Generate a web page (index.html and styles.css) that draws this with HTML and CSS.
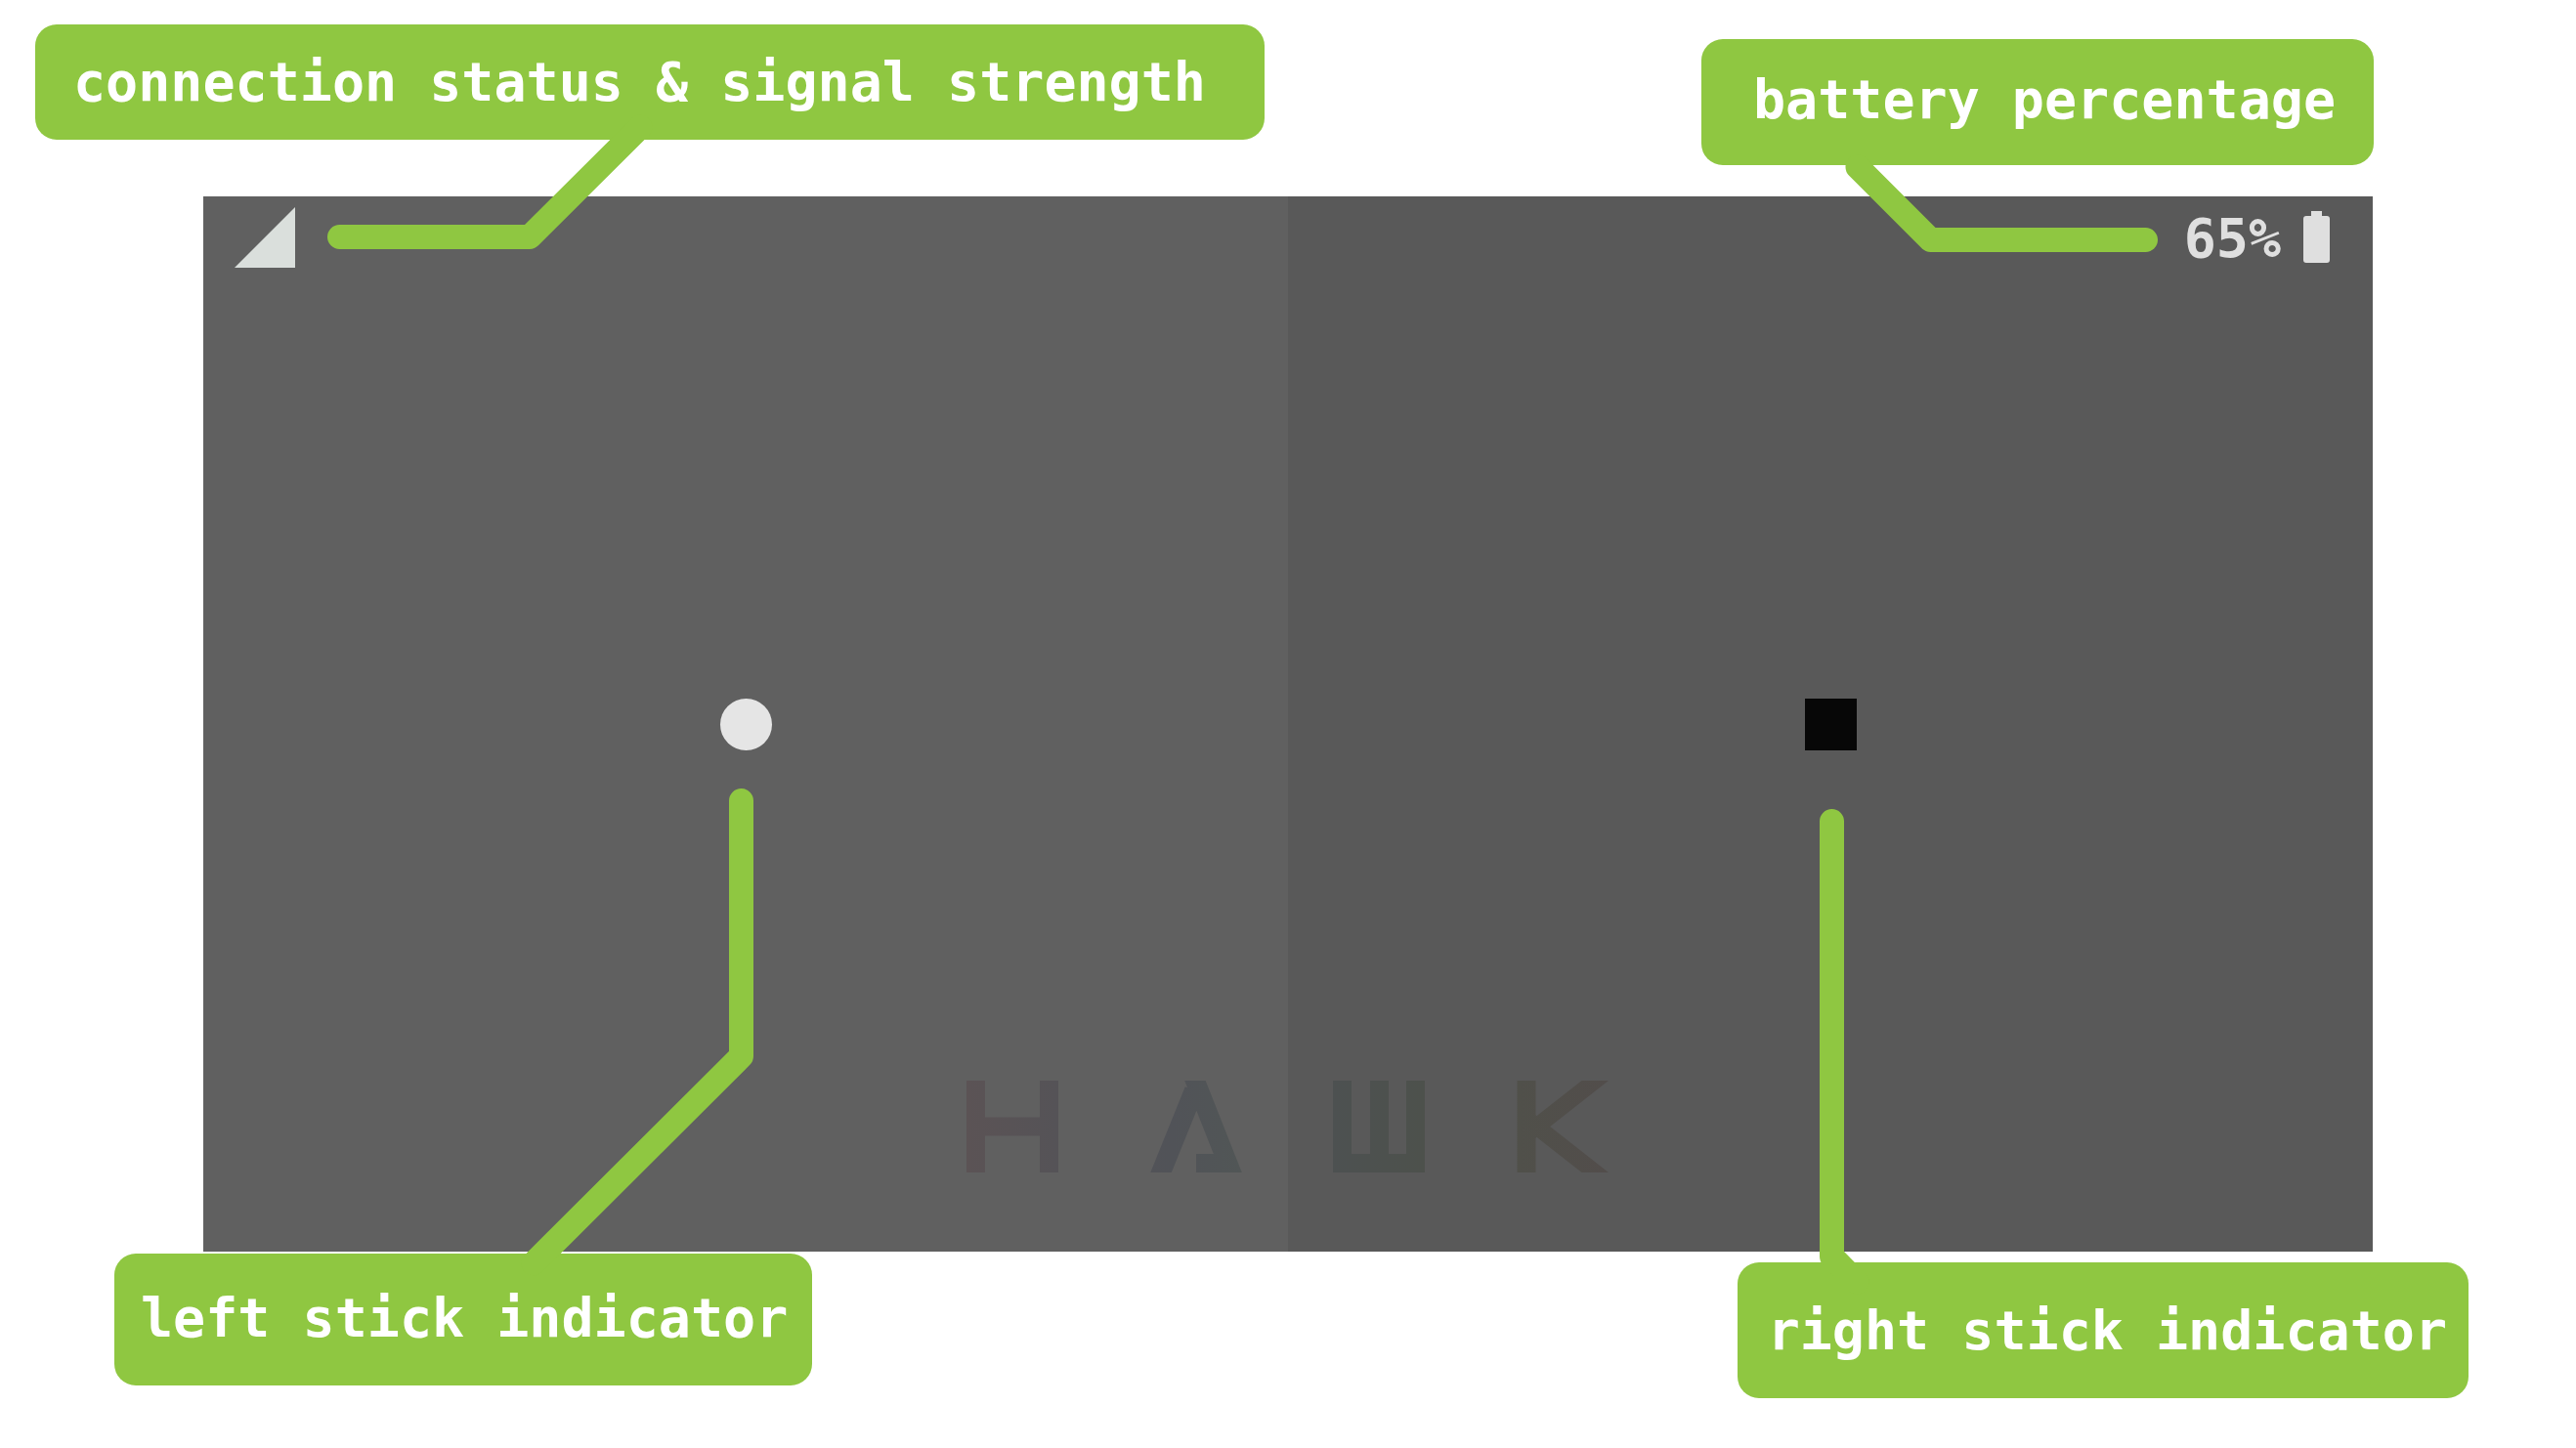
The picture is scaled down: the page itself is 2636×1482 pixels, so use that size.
FILE: index.html
```html
<!DOCTYPE html>
<html lang="en">
<head>
<meta charset="utf-8">
<meta name="viewport" content="width=device-width, initial-scale=1">
<title>Hawk controller screen guide</title>
<link rel="stylesheet" href="styles.css">
</head>
<body>
<main class="guide">
  <div class="callouts callouts-top">
    <p class="callout callout-signal">connection status &amp; signal strength</p>
    <p class="callout callout-battery">battery percentage</p>
  </div>

  <section class="screen" aria-label="Controller screen">
    <div class="panel panel-left">
      <div class="status">
        <svg class="signal-icon" viewBox="0 0 62 62" role="img" aria-label="Signal"><path d="M0 62L62 0V62Z"/></svg>
      </div>
      <div class="stick stick-left"></div>
    </div>
    <div class="panel panel-right">
      <div class="status status-right">
        <span class="percent">65%</span>
        <svg class="battery-icon" viewBox="0 0 27 53" role="img" aria-label="Battery"><path d="M8 0H19V5H24Q27 5 27 8V50Q27 53 24 53H3Q0 53 0 50V8Q0 5 3 5H8Z"/></svg>
      </div>
      <div class="stick stick-right"></div>
    </div>
    <svg class="logo" viewBox="0 0 658 94" role="img" aria-label="Hawk">
      <defs>
        <linearGradient id="tint" gradientUnits="userSpaceOnUse" x1="0" y1="0" x2="658" y2="0">
          <stop offset="0" stop-color="#5b5355"/>
          <stop offset=".14" stop-color="#555357"/>
          <stop offset=".32" stop-color="#515358"/>
          <stop offset=".43" stop-color="#515656"/>
          <stop offset=".57" stop-color="#4d5151"/>
          <stop offset=".71" stop-color="#4d514c"/>
          <stop offset=".86" stop-color="#50504a"/>
          <stop offset="1" stop-color="#524d4b"/>
        </linearGradient>
      </defs>
      <g fill="none" stroke="url(#tint)">
        <path stroke-width="19" d="M9.500 0V94M84.500 0V94M19 47L76 47.100"/>
        <path stroke-width="20" d="M195 104L233 10M230 -10L275 104"/>
        <path stroke-width="19" d="M235 84.500L272 84.600"/>
        <path stroke-width="19" d="M384.500 0V84.500H459.500V0M422.500 0V84.500M375 84.500H469"/>
        <path stroke-width="19" d="M573 0V94"/>
        <path stroke-width="17" d="M656 -10L572 56M656 104L572 38"/>
      </g>
    </svg>
  </section>

  <div class="callouts callouts-bottom">
    <p class="callout callout-left-stick">left stick indicator</p>
    <p class="callout callout-right-stick">right stick indicator</p>
  </div>

  <svg class="leaders" viewBox="0 0 2636 1482" aria-hidden="true">
    <path d="M347.500 242.500H542L655 130"/>
    <path d="M2195.500 245.500H1975.500L1901 171"/>
    <path d="M758.500 819.500V1081L546 1293"/>
    <path d="M1874.500 840.500V1286L1900 1312"/>
  </svg>
</main>
</body>
</html>
```
FILE: styles.css
```css
* {
  box-sizing: border-box;
}

body {
  margin: 0;
  background: #fff;
  font-family: "DejaVu Sans Mono", "Liberation Mono", monospace;
  font-size: 55px;
  line-height: 64px;
  font-weight: 700;
}

.guide {
  position: relative;
}

.callouts {
  display: flex;
  justify-content: space-between;
  align-items: flex-start;
}

.callouts-top {
  padding: 25px 207px 32px 36px;
}

.callouts-bottom {
  padding: 2px 110px 51px 117px;
}

.callout {
  margin: 0;
  border-radius: 22px;
  background: #8fc741;
  color: #fff;
  white-space: nowrap;
}

.callout-signal {
  padding: 27px 60px 27px 39px;
}

.callout-battery {
  margin-top: 15px;
  padding: 30px 39px 35px 53px;
}

.callout-left-stick {
  padding: 34px 25px 37px 27px;
}

.callout-right-stick {
  margin-top: 9px;
  padding: 38px 22px 37px 31px;
}

.screen {
  position: relative;
  display: grid;
  grid-template-columns: 1fr 1fr;
  aspect-ratio: 37 / 18;
  margin: 0 208px;
}

.panel {
  display: grid;
  grid-template-rows: 1fr auto 1fr;
  justify-items: center;
}

.panel-left {
  background: #606060;
}

.panel-right {
  background: #595959;
}

.status {
  display: flex;
  align-items: flex-start;
  justify-self: stretch;
  padding: 11px 32px;
}

.status-right {
  justify-content: flex-end;
  gap: 23px;
  padding: 11px 44px;
}

.signal-icon {
  width: 62px;
  height: 62px;
  fill: #dadfdc;
}

.percent {
  color: #dfdfdf;
}

.battery-icon {
  width: 27px;
  height: 53px;
  margin-top: 4px;
  fill: #dfdfdf;
}

.stick {
  width: 53px;
  height: 53px;
}

.stick-left {
  border-radius: 50%;
  background: #e5e5e5;
}

.stick-right {
  background: #070707;
}

.logo {
  position: absolute;
  left: 0;
  right: 0;
  bottom: 81px;
  width: 658px;
  height: 94px;
  margin: 0 auto;
}

.leaders {
  position: absolute;
  top: 0;
  left: 0;
  width: 100%;
  pointer-events: none;
  fill: none;
  stroke: #8fc741;
  stroke-width: 25;
  stroke-linecap: round;
  stroke-linejoin: round;
}
```
